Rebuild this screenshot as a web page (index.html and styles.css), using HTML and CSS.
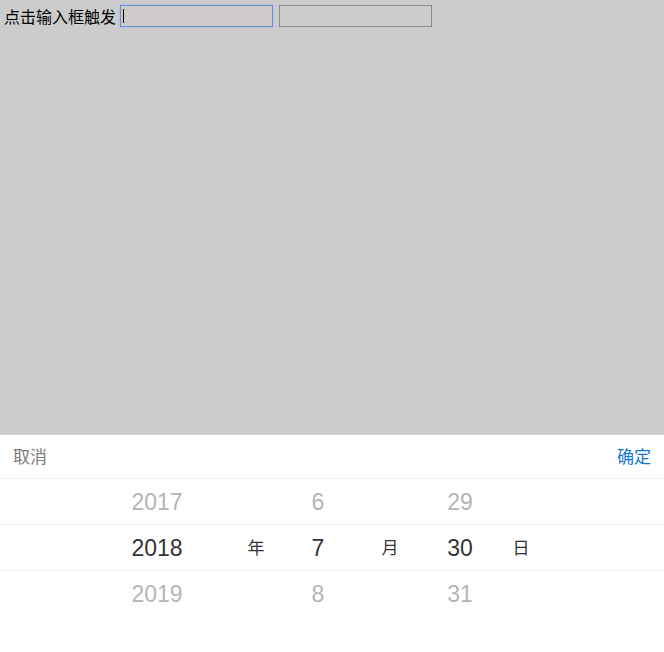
FILE: index.html
```html
<!DOCTYPE html>
<html lang="zh-CN">
<head>
<meta charset="utf-8">
<title>日期选择</title>
<link rel="stylesheet" href="styles.css">
</head>
<body>
<div class="page">
  <div class="form-row">
    <span class="label">点击输入框触发</span>
    <span class="field focused"><input class="input" type="text"><span class="caret"></span></span>
    <span class="field"><input class="input" type="text"></span>
  </div>
</div>
<div class="picker">
  <div class="picker-header">
    <span class="btn cancel">取消</span>
    <span class="btn confirm">确定</span>
  </div>
  <div class="wheel">
    <div class="row dim">
      <span class="c-year">2017</span>
      <span class="c-month">6</span>
      <span class="c-day">29</span>
    </div>
    <div class="row active">
      <span class="c-year">2018</span>
      <span class="c-yu unit">年</span>
      <span class="c-month">7</span>
      <span class="c-mu unit">月</span>
      <span class="c-day">30</span>
      <span class="c-du unit">日</span>
    </div>
    <div class="row dim">
      <span class="c-year">2019</span>
      <span class="c-month">8</span>
      <span class="c-day">31</span>
    </div>
  </div>
</div>
</body>
</html>
```

FILE: styles.css
```css
html, body {
  margin: 0;
  padding: 0;
  height: 100%;
}
body {
  background: #ffffff;
  font-family: "Noto Sans CJK SC", "Liberation Sans", sans-serif;
  display: flex;
  flex-direction: column;
}
.page {
  height: 435px;
  background: #cccccc;
  box-sizing: border-box;
  padding: 5px 0 0 4px;
}
.form-row {
  display: flex;
  align-items: center;
  height: 22px;
}
.label {
  font-size: 16px;
  color: #000;
  line-height: 22px;
  margin-right: 4px;
}
.field {
  position: relative;
  display: inline-block;
  margin-right: 6px;
}
.input {
  display: block;
  box-sizing: border-box;
  width: 153px;
  height: 22px;
  margin: 0;
  padding: 0 2px;
  border: 1px solid #8c8c8c;
  background: transparent;
  outline: none;
}
.focused .input {
  border-color: #6f8fc6;
  background: rgba(215, 195, 195, 0.25);
  box-shadow: 0 0 0 1px rgba(170, 195, 235, 0.7);
}
.caret {
  position: absolute;
  left: 3px;
  top: 4px;
  width: 1px;
  height: 14px;
  background: #000;
}
.picker {
  flex: 1;
  background: #ffffff;
}
.picker-header {
  height: 43px;
  border-bottom: 1px solid #f0f0f0;
  display: flex;
  align-items: center;
  justify-content: space-between;
  padding: 0 13px;
}
.btn {
  font-size: 17px;
  line-height: 1;
  padding-bottom: 2px;
}
.cancel {
  color: #7a7a7a;
}
.confirm {
  color: #1476d4;
}
.row {
  display: grid;
  grid-template-columns: 127px 60px 39px 60px 2px 60px 12px 60px 10px 60px 1px 60px;
  align-items: center;
  height: 45px;
  font-family: "Liberation Sans", "Noto Sans CJK SC", sans-serif;
  font-size: 23px;
  text-align: center;
}
.row span {
  line-height: 1;
  padding-top: 2px;
}
.row.dim {
  color: #b5b5b5;
}
.row.active {
  color: #333333;
  height: 45px;
  border-top: 1px solid #f0f0f0;
  border-bottom: 1px solid #f0f0f0;
}
.c-year { grid-column: 2; }
.c-yu { grid-column: 4; }
.c-month { grid-column: 6; }
.c-mu { grid-column: 8; }
.c-day { grid-column: 10; }
.c-du { grid-column: 12; }
.row .unit {
  font-family: "Noto Sans CJK SC", sans-serif;
  font-size: 17px;
  color: #333;
  padding-top: 0;
  padding-bottom: 2px;
}
```
